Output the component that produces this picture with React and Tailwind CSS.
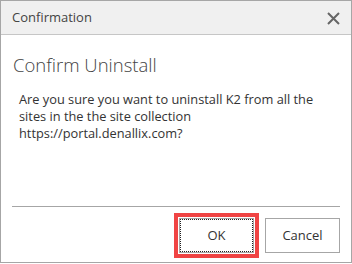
export default function App() {
  return (
    <div
      className="w-[352px] h-[264px] bg-white"
      style={{ fontFamily: '"Open Sans", "Noto Sans", sans-serif' }}
    >
      <div className="flex h-[263px] flex-col border border-[#a6a6a6] text-[#444]">
        {/* Title bar */}
        <div className="flex h-[34px] items-center justify-between border-b border-[#c6c6c6] bg-[#f0f0f0] pl-[11px] pr-[11px]">
          <span className="text-[13px] text-[#444]">Confirmation</span>
          <svg width="13" height="13" viewBox="0 0 13 13" className="mt-[1px]">
            <path d="M1 1 L12 12 M12 1 L1 12" stroke="#666" strokeWidth="2" />
          </svg>
        </div>

        {/* Body */}
        <div className="flex-1 px-3">
          <h1 className="mt-[17px] text-[18.5px] font-light leading-[26px] text-[#444]">
            Confirm Uninstall
          </h1>
          <p className="mt-[13px] pl-[6px] text-[12.8px] leading-[17px] text-[#333]">
            Are you sure you want to uninstall K2 from all the
            <br />
            sites in the the site collection
            <br />
            https://portal.denallix.com?
          </p>
        </div>

        {/* Footer */}
        <div className="mx-[11px] border-t border-[#a6a6a6]" />
        <div className="flex justify-end gap-[6px] pr-[11px] pt-[6px] pb-[4px]">
          <div className="border-[4px] border-[#f04444] p-[1px]">
            <button className="flex h-[35px] w-[75px] items-center justify-center border border-[#a6a6a6] text-[13px] text-[#333] outline-1 outline-dotted outline-[#222] -outline-offset-2">
              OK
            </button>
          </div>
          <button className="mt-[5px] flex h-[35px] w-[75px] items-center justify-center border border-[#a6a6a6] text-[13px] text-[#333]">
            Cancel
          </button>
        </div>
      </div>
    </div>
  );
}
